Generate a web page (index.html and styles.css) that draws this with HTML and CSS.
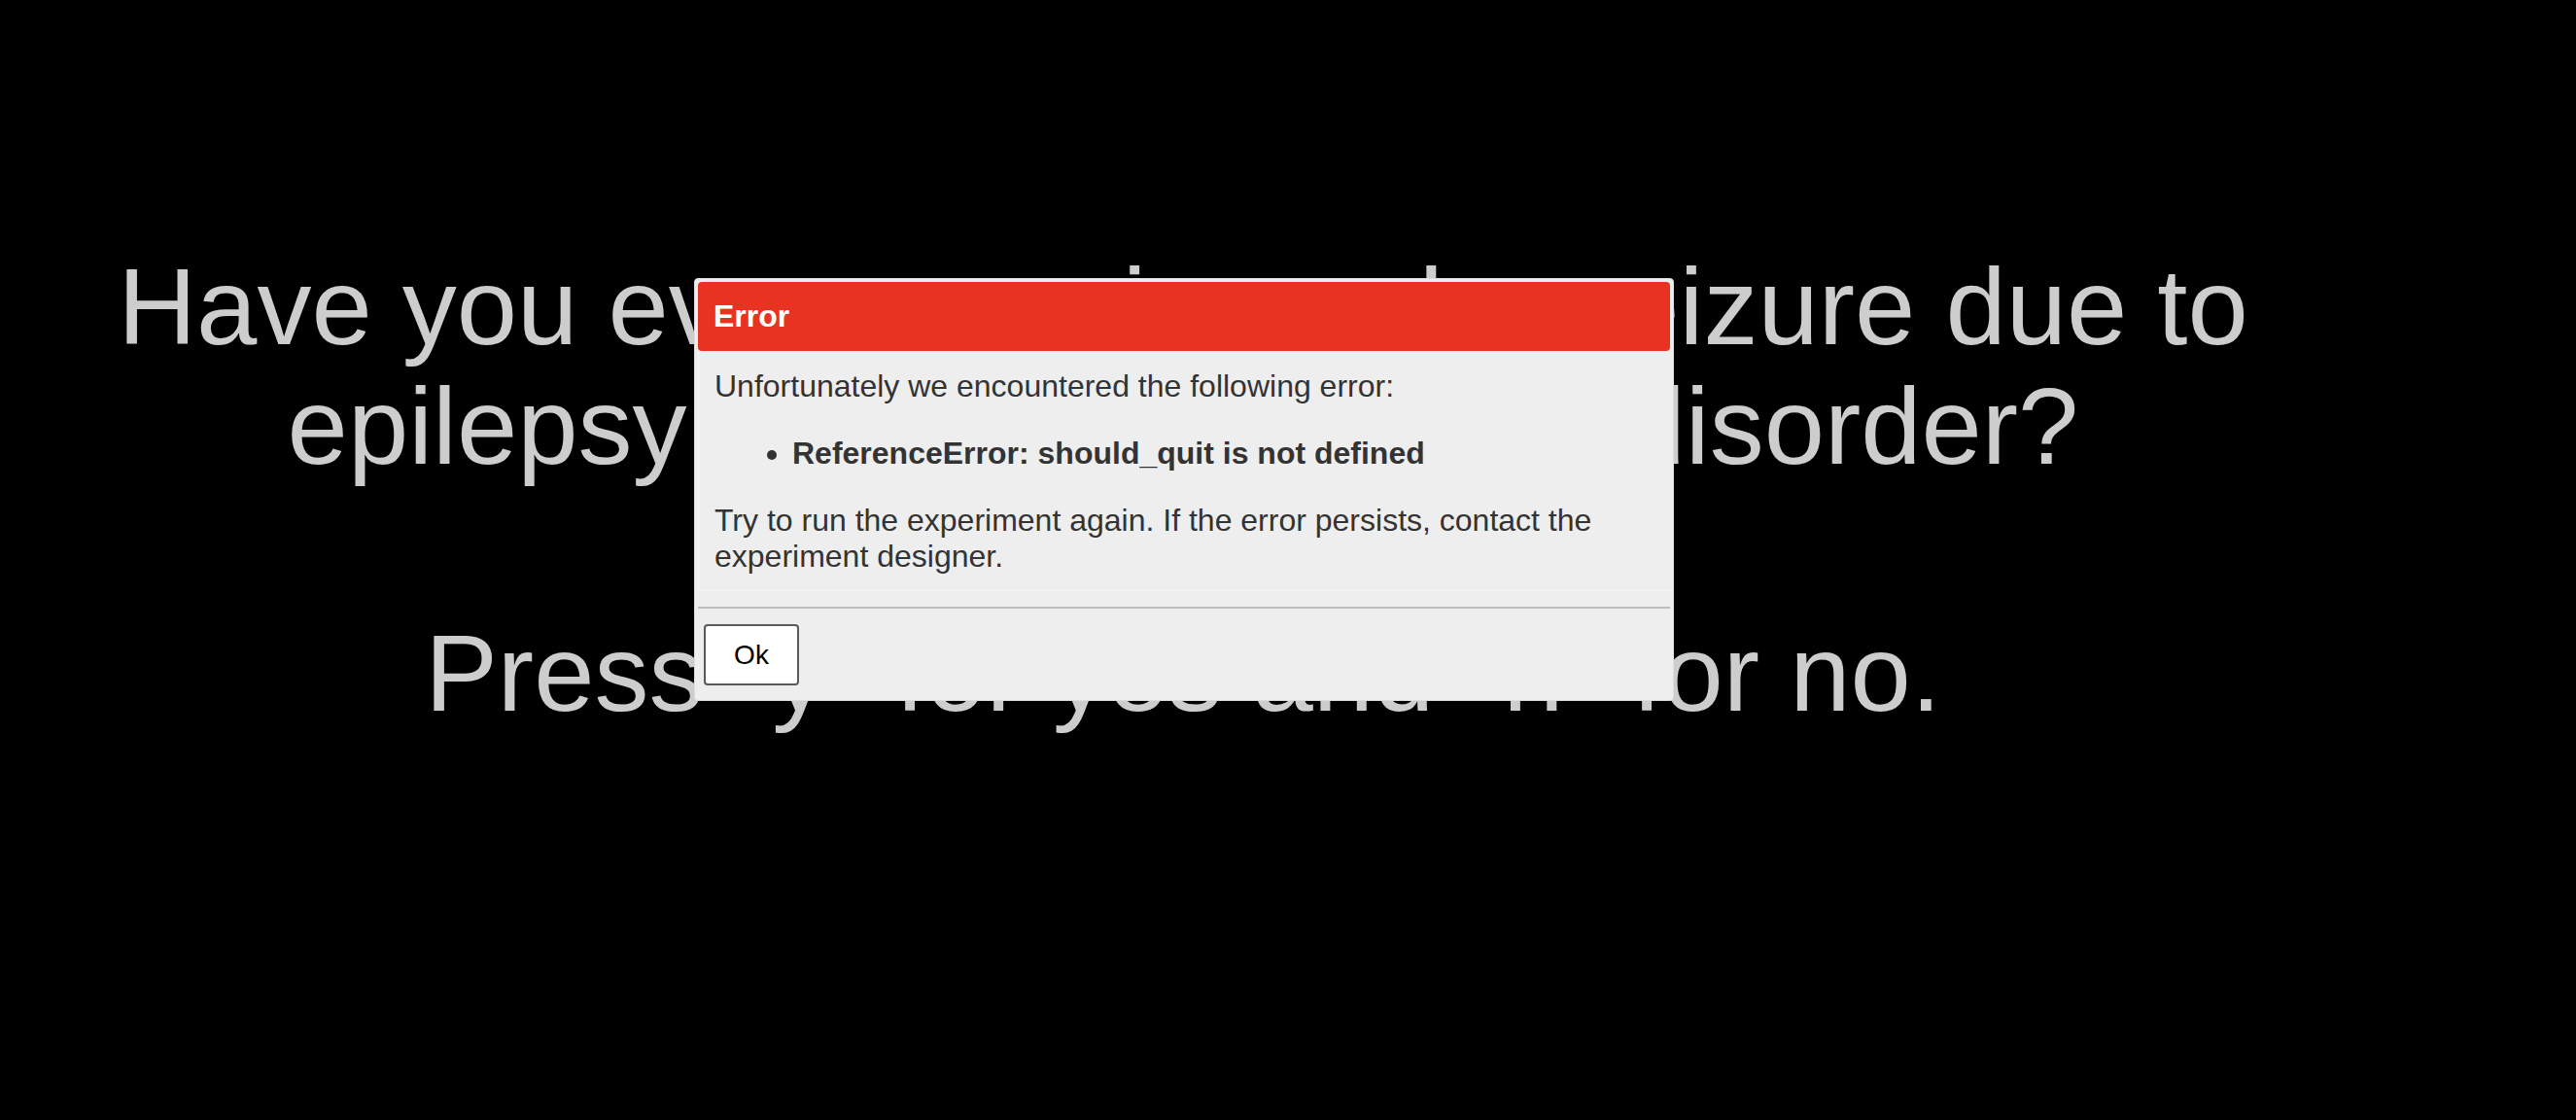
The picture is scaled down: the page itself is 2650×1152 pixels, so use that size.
FILE: index.html
```html
<!DOCTYPE html>
<html lang="en">
<head>
<meta charset="utf-8">
<title>Experiment</title>
<link rel="stylesheet" href="styles.css">
</head>
<body>
<div class="stage">
  <p class="stimulus">Have you ever experienced a seizure due to<br>epilepsy or another seizure disorder?</p>
  <p class="stimulus prompt">Press "y" for yes and "n" for no.</p>
</div>

<div class="dialog" role="dialog">
  <div class="titlebar"><span class="title">Error</span></div>
  <div class="content">
    <p class="msg">Unfortunately we encountered the following error:</p>
    <ul class="errors">
      <li>ReferenceError: should_quit is not defined</li>
    </ul>
    <p class="msg">Try to run the experiment again. If the error persists, contact the experiment designer.</p>
  </div>
  <div class="buttonpane">
    <button class="ok" type="button">Ok</button>
  </div>
</div>
</body>
</html>
```

FILE: styles.css
```css
html, body {
  margin: 0;
  padding: 0;
  background: #000;
  height: 100%;
}

body {
  font-family: "Liberation Sans", Arial, sans-serif;
  position: relative;
  overflow: hidden;
}

.stage {
  width: 2434px;
  padding-top: 254px;
  text-align: center;
}

.stimulus {
  margin: 0;
  font-size: 112px;
  line-height: 123px;
  color: #cdcdcd;
}

.prompt {
  margin-top: 131px;
}

.dialog {
  position: absolute;
  left: 714px;
  top: 286px;
  width: 1008px;
  box-sizing: border-box;
  background: #eeeeee;
  border: 1px solid #dddddd;
  border-radius: 4px;
  padding: 3px;
  color: #333333;
  font-size: 32px;
}

.titlebar {
  background: #e83323;
  border-radius: 4px;
  padding: 17px 16px;
  color: #ffffff;
  font-weight: bold;
  line-height: normal;
}

.content {
  margin-top: 2px;
  padding: 16px;
  background: #eeeeee;
  border-left: 1px solid #f4f4f4;
  border-bottom: 1px solid #f4f4f4;
  line-height: normal;
}

.msg {
  margin: 0;
}

.errors {
  margin: 32px 0;
  padding-left: 80px;
  font-weight: bold;
}

.buttonpane {
  margin-top: 16px;
  border-top: 2px solid #bdbdbd;
  padding: 16px 6px 12px;
  display: flex;
}

.ok {
  width: 98px;
  height: 63px;
  background: #ffffff;
  border: 2px solid #5a5a5a;
  border-radius: 4px;
  font-family: "Liberation Sans", Arial, sans-serif;
  font-size: 28px;
  color: #000000;
  padding: 0;
}
```
